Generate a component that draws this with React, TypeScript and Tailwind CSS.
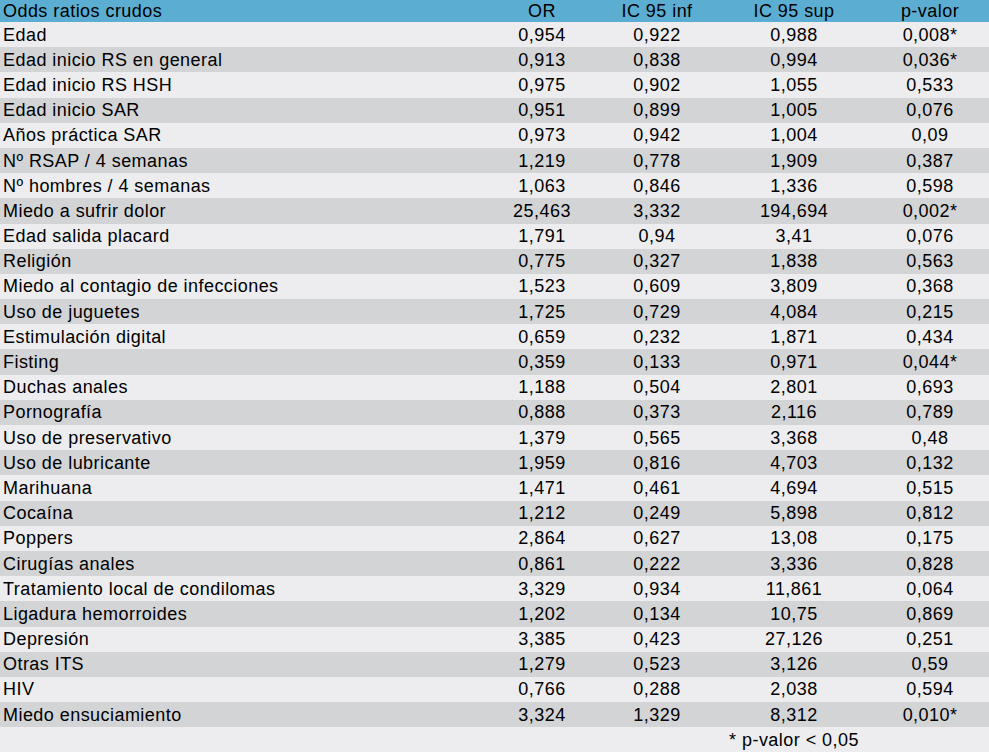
import React from "react";

const rows: [string, string, string, string, string][] = [
  ["Edad", "0,954", "0,922", "0,988", "0,008*"],
  ["Edad inicio RS en general", "0,913", "0,838", "0,994", "0,036*"],
  ["Edad inicio RS HSH", "0,975", "0,902", "1,055", "0,533"],
  ["Edad inicio SAR", "0,951", "0,899", "1,005", "0,076"],
  ["Años práctica SAR", "0,973", "0,942", "1,004", "0,09"],
  ["Nº RSAP / 4 semanas", "1,219", "0,778", "1,909", "0,387"],
  ["Nº hombres / 4 semanas", "1,063", "0,846", "1,336", "0,598"],
  ["Miedo a sufrir dolor", "25,463", "3,332", "194,694", "0,002*"],
  ["Edad salida placard", "1,791", "0,94", "3,41", "0,076"],
  ["Religión", "0,775", "0,327", "1,838", "0,563"],
  ["Miedo al contagio de infecciones", "1,523", "0,609", "3,809", "0,368"],
  ["Uso de juguetes", "1,725", "0,729", "4,084", "0,215"],
  ["Estimulación digital", "0,659", "0,232", "1,871", "0,434"],
  ["Fisting", "0,359", "0,133", "0,971", "0,044*"],
  ["Duchas anales", "1,188", "0,504", "2,801", "0,693"],
  ["Pornografía", "0,888", "0,373", "2,116", "0,789"],
  ["Uso de preservativo", "1,379", "0,565", "3,368", "0,48"],
  ["Uso de lubricante", "1,959", "0,816", "4,703", "0,132"],
  ["Marihuana", "1,471", "0,461", "4,694", "0,515"],
  ["Cocaína", "1,212", "0,249", "5,898", "0,812"],
  ["Poppers", "2,864", "0,627", "13,08", "0,175"],
  ["Cirugías anales", "0,861", "0,222", "3,336", "0,828"],
  ["Tratamiento local de condilomas", "3,329", "0,934", "11,861", "0,064"],
  ["Ligadura hemorroides", "1,202", "0,134", "10,75", "0,869"],
  ["Depresión", "3,385", "0,423", "27,126", "0,251"],
  ["Otras ITS", "1,279", "0,523", "3,126", "0,59"],
  ["HIV", "0,766", "0,288", "2,038", "0,594"],
  ["Miedo ensuciamiento", "3,324", "1,329", "8,312", "0,010*"],
];

const grid = "grid grid-cols-[1fr_134px_96px_178px_106px] items-center";

export default function App() {
  return (
    <div
      className="w-[989px] h-[752px] bg-[#ededef] text-black text-[18px] tracking-[0.45px] leading-none overflow-hidden"
      style={{ fontFamily: '"Liberation Sans", Arial, sans-serif' }}
    >
      <div className={`${grid} h-[22px] bg-[#5baed1]`}>
        <div className="pl-[3px]">Odds ratios crudos</div>
        <div className="text-center">OR</div>
        <div className="text-center">IC 95 inf</div>
        <div className="text-center">IC 95 sup</div>
        <div className="text-center pr-[12px]">p-valor</div>
      </div>
      {rows.map((r, i) => (
        <div
          key={i}
          className={`${grid} h-[25.2px] ${i % 2 === 0 ? "bg-[#ededef]" : "bg-[#d3d4d6]"}`}
        >
          <div className="pl-[3px]">{r[0]}</div>
          <div className="text-center">{r[1]}</div>
          <div className="text-center">{r[2]}</div>
          <div className="text-center">{r[3]}</div>
          <div className="text-center pr-[12px]">{r[4]}</div>
        </div>
      ))}
      <div className={`${grid} h-[25px]`}>
        <div></div>
        <div></div>
        <div></div>
        <div className="text-center whitespace-nowrap">* p-valor &lt; 0,05</div>
        <div></div>
      </div>
    </div>
  );
}
